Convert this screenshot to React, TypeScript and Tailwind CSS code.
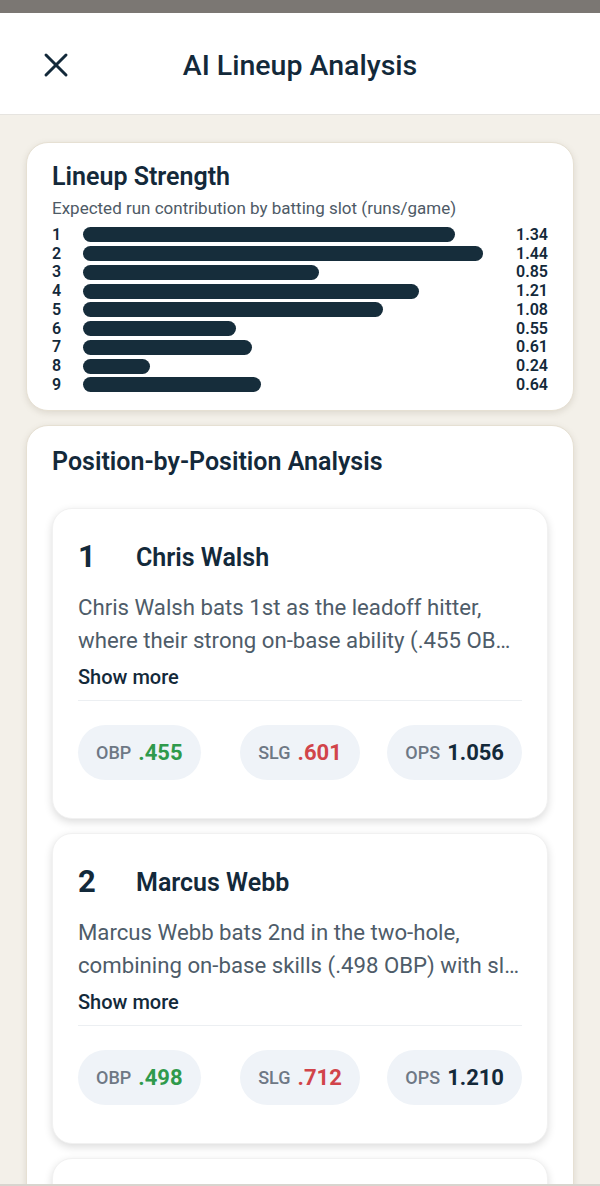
import React from 'react';
import { X } from 'lucide-react';

const slots = [
  { slot: 1, value: 1.34 },
  { slot: 2, value: 1.44 },
  { slot: 3, value: 0.85 },
  { slot: 4, value: 1.21 },
  { slot: 5, value: 1.08 },
  { slot: 6, value: 0.55 },
  { slot: 7, value: 0.61 },
  { slot: 8, value: 0.24 },
  { slot: 9, value: 0.64 },
];

// blurb is shown as two lines, the second one cut with an ellipsis
const players = [
  {
    order: 1,
    name: 'Chris Walsh',
    line1: 'Chris Walsh bats 1st as the leadoff hitter,',
    rest: 'where their strong on-base ability (.455 OBP) sets the table for the heart of the order.',
    obp: '.455',
    slg: '.601',
    ops: '1.056',
  },
  {
    order: 2,
    name: 'Marcus Webb',
    line1: 'Marcus Webb bats 2nd in the two-hole,',
    rest: 'combining on-base skills (.498 OBP) with slugging power to move runners along.',
    obp: '.498',
    slg: '.712',
    ops: '1.210',
  },
  {
    order: 3,
    name: 'Devon Price',
    line1: 'Devon Price bats 3rd, bringing consistent',
    rest: 'contact and gap power to drive in the table-setters ahead of him.',
    obp: '.402',
    slg: '.540',
    ops: '0.942',
  },
];

const maxValue = Math.max(...slots.map(s => s.value));

function StatPill({ label, value, tone, place }: { label: string; value: string; tone: string; place: string }) {
  return (
    <div className={`flex items-center gap-[7px] h-[55px] px-[18px] rounded-full bg-[#eff3f8] ${place}`}>
      <span className="text-[18px] font-medium text-[#6e7885]">{label}</span>
      <span className={`text-[22px] font-bold ${tone}`}>{value}</span>
    </div>
  );
}

function PlayerCard({ p }: { p: (typeof players)[number] }) {
  return (
    <div className="bg-white rounded-[20px] border border-[#f1f1f1] shadow-[0_3px_8px_rgba(0,0,0,0.14)] px-[25px] pt-7 pb-[38px]">
      <div className="flex items-center h-10">
        <span className="w-[58px] text-[31px] font-bold text-[#13293a]">{p.order}</span>
        <span className="text-[25px] font-semibold text-[#13293a]">{p.name}</span>
      </div>
      <div className="mt-[14px] text-[22.2px] leading-[33px] text-[#4e5c69]">
        <p>{p.line1}</p>
        <p className="whitespace-nowrap overflow-hidden text-ellipsis">{p.rest}</p>
      </div>
      <button className="mt-[5px] h-7 text-[20px] font-medium text-[#13293a]">Show more</button>
      <div className="mt-[9px] border-t border-[#eceff2]" />
      <div className="pt-6 grid grid-cols-3 items-center">
        <StatPill label="OBP" value={p.obp} tone="text-[#2f9a4c]" place="justify-self-start" />
        <StatPill label="SLG" value={p.slg} tone="text-[#d1444a]" place="justify-self-center" />
        <StatPill label="OPS" value={p.ops} tone="text-[#13293a]" place="justify-self-end" />
      </div>
    </div>
  );
}

export default function App() {
  return (
    <div className="h-[1186px] flex flex-col overflow-hidden bg-[#f3f0e9] font-['Roboto',sans-serif]">
      {/* status strip */}
      <div className="h-[13px] bg-[#7b7773] flex-shrink-0" />

      {/* Header */}
      <header className="h-[102px] flex-shrink-0 bg-white border-b border-[#e6e4e0] flex items-center relative pt-[2px]">
        <button className="ml-9 text-[#13293a]">
          <X size={40} strokeWidth={1.8} />
        </button>
        <h1 className="absolute left-0 right-0 top-[32px] text-center text-[28.5px] font-medium text-[#13293a] pointer-events-none">
          AI Lineup Analysis
        </h1>
      </header>

      <main className="flex-1 min-h-0 overflow-hidden px-[26px] pt-[27px] flex flex-col gap-[14px]">
        {/* Lineup Strength */}
        <section className="bg-white rounded-[22px] border border-[#e6e0d3] shadow-[0_2px_6px_rgba(120,110,90,0.18)] px-[25px] pt-5 pb-4">
          <h2 className="text-[25px] leading-[28px] font-semibold text-[#13293a]">Lineup Strength</h2>
          <p className="mt-[7px] text-[17px] leading-5 text-[#4e5a66]">
            Expected run contribution by batting slot (runs/game)
          </p>
          <div className="mt-[7.5px] flex flex-col">
            {slots.map(s => (
              <div key={s.slot} className="flex items-center h-[18.75px]">
                <span className="w-[31px] text-[16px] font-semibold text-[#13293a]">{s.slot}</span>
                <div className="flex-1 h-[15px]">
                  <div
                    className="h-full rounded-full bg-[#162d3b]"
                    style={{ width: `${(s.value / maxValue) * 100}%` }}
                  />
                </div>
                <span className="w-[65px] text-right text-[16px] font-semibold text-[#13293a]">
                  {s.value.toFixed(2)}
                </span>
              </div>
            ))}
          </div>
        </section>

        {/* Position-by-Position */}
        <section className="bg-white rounded-t-[22px] border border-[#e6e0d3] shadow-[0_2px_6px_rgba(120,110,90,0.18)] px-[25px] pt-[22px] pb-6 flex flex-col">
          <h2 className="text-[25px] leading-[28px] font-semibold text-[#13293a]">Position-by-Position Analysis</h2>
          <div className="mt-[32px] flex flex-col gap-[14px]">
            {players.map(p => (
              <PlayerCard key={p.order} p={p} />
            ))}
          </div>
        </section>
      </main>

      <div className="h-[2px] flex-shrink-0 bg-[#d8d5cf]" />
    </div>
  );
}
